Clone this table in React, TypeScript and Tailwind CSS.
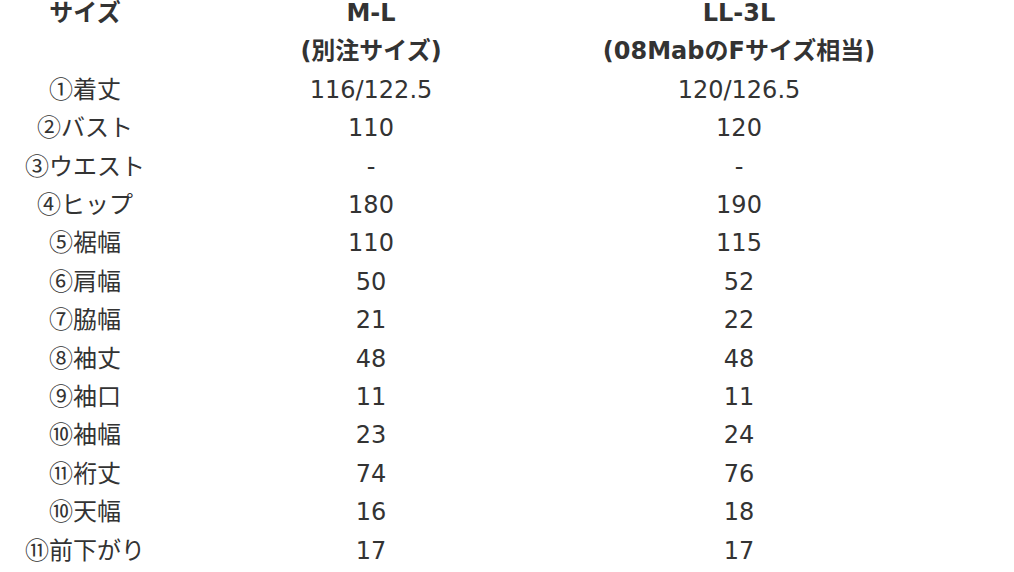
import React from 'react';

const rows: [string, string, string, string][] = [
  ['①', '着丈', '116/122.5', '120/126.5'],
  ['②', 'バスト', '110', '120'],
  ['③', 'ウエスト', '-', '-'],
  ['④', 'ヒップ', '180', '190'],
  ['⑤', '裾幅', '110', '115'],
  ['⑥', '肩幅', '50', '52'],
  ['⑦', '脇幅', '21', '22'],
  ['⑧', '袖丈', '48', '48'],
  ['⑨', '袖口', '11', '11'],
  ['⑩', '袖幅', '23', '24'],
  ['⑪', '裄丈', '74', '76'],
  ['⑩', '天幅', '16', '18'],
  ['⑪', '前下がり', '17', '17'],
];

const App: React.FC = () => {
  return (
    <div className="w-[1014px] h-[572px] overflow-hidden bg-white text-[#333] font-['DejaVu_Sans','Noto_Sans_CJK_JP',sans-serif] text-[24px] leading-[38.4px]">
      <table className="-mt-[6px] w-[906px] border-collapse table-fixed">
        <colgroup>
          <col className="w-[170px]" />
          <col className="w-[402px]" />
          <col className="w-[334px]" />
        </colgroup>
        <thead>
          <tr className="font-bold">
            <th className="p-0 align-top text-center">サイズ</th>
            <th className="p-0 align-top text-center">
              M-L
              <br />
              (別注サイズ)
            </th>
            <th className="p-0 align-top text-center">
              LL-3L
              <br />
              (08MabのFサイズ相当)
            </th>
          </tr>
        </thead>
        <tbody>
          {rows.map(([num, label, ml, ll], i) => (
            <tr key={i} className="h-[38.4px]">
              <td className="p-0 text-center">
                <span className="font-['Noto_Sans_CJK_JP',sans-serif] leading-none">{num}</span>
                {label}
              </td>
              <td className="p-0 text-center">{ml}</td>
              <td className="p-0 text-center">{ll}</td>
            </tr>
          ))}
        </tbody>
      </table>
    </div>
  );
};

export default App;
